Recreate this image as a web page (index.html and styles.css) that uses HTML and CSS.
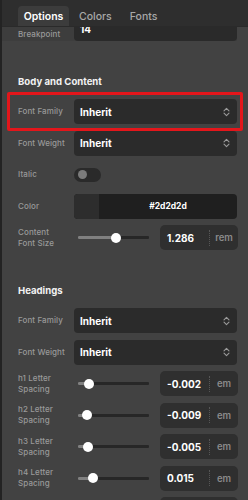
FILE: index.html
```html
<!DOCTYPE html>
<html>
<head>
<meta charset="utf-8">
<link rel="stylesheet" href="styles.css">
</head>
<body>
<div class="app">
  <div class="tabs">
    <div class="tab active">Options</div>
    <div class="tab">Colors</div>
    <div class="tab">Fonts</div>
  </div>
  <div class="panel">
    <div class="row row-clip">
      <div class="label">Breakpoint</div>
      <div class="clip"><div class="input">14</div></div>
    </div>

    <section class="section">
      <h2 class="heading">Body and Content</h2>
      <div class="rows">
        <div class="row highlight">
          <div class="label">Font Family</div>
          <div class="select"><span>Inherit</span><svg class="chev" width="7" height="10" viewBox="0 0 7 10"><path d="M1 3.8 L3.5 1.3 L6 3.8 M1 6.2 L3.5 8.7 L6 6.2" fill="none" stroke="#9a9a9a" stroke-width="1.1" stroke-linecap="round" stroke-linejoin="round"/></svg></div>
        </div>
        <div class="row">
          <div class="label">Font Weight</div>
          <div class="select"><span>Inherit</span><svg class="chev" width="7" height="10" viewBox="0 0 7 10"><path d="M1 3.8 L3.5 1.3 L6 3.8 M1 6.2 L3.5 8.7 L6 6.2" fill="none" stroke="#9a9a9a" stroke-width="1.1" stroke-linecap="round" stroke-linejoin="round"/></svg></div>
        </div>
        <div class="row">
          <div class="label">Italic</div>
          <div><div class="toggle"><div class="knob"></div></div></div>
        </div>
        <div class="row">
          <div class="label">Color</div>
          <div class="color"><div class="swatch"></div><div class="hex">#2d2d2d</div></div>
        </div>
        <div class="row">
          <div class="label">Content<br>Font Size</div>
          <div class="control">
            <div class="slider"><div class="track"><div class="fill" style="width:53%"></div><div class="thumb"></div></div></div>
            <div class="num"><span class="val">1.286</span><span class="sep"></span><span class="unit">rem</span></div>
          </div>
        </div>
      </div>
    </section>

    <section class="section">
      <h2 class="heading">Headings</h2>
      <div class="rows">
        <div class="row">
          <div class="label">Font Family</div>
          <div class="select"><span>Inherit</span><svg class="chev" width="7" height="10" viewBox="0 0 7 10"><path d="M1 3.8 L3.5 1.3 L6 3.8 M1 6.2 L3.5 8.7 L6 6.2" fill="none" stroke="#9a9a9a" stroke-width="1.1" stroke-linecap="round" stroke-linejoin="round"/></svg></div>
        </div>
        <div class="row">
          <div class="label">Font Weight</div>
          <div class="select"><span>Inherit</span><svg class="chev" width="7" height="10" viewBox="0 0 7 10"><path d="M1 3.8 L3.5 1.3 L6 3.8 M1 6.2 L3.5 8.7 L6 6.2" fill="none" stroke="#9a9a9a" stroke-width="1.1" stroke-linecap="round" stroke-linejoin="round"/></svg></div>
        </div>
        <div class="row">
          <div class="label">h1 Letter<br>Spacing</div>
          <div class="control">
            <div class="slider"><div class="track"><div class="fill" style="width:16%"></div><div class="thumb"></div></div></div>
            <div class="num"><span class="val">-0.002</span><span class="sep"></span><span class="unit">em</span></div>
          </div>
        </div>
        <div class="row">
          <div class="label">h2 Letter<br>Spacing</div>
          <div class="control">
            <div class="slider"><div class="track"><div class="fill" style="width:13%"></div><div class="thumb"></div></div></div>
            <div class="num"><span class="val">-0.009</span><span class="sep"></span><span class="unit">em</span></div>
          </div>
        </div>
        <div class="row">
          <div class="label">h3 Letter<br>Spacing</div>
          <div class="control">
            <div class="slider"><div class="track"><div class="fill" style="width:14%"></div><div class="thumb"></div></div></div>
            <div class="num"><span class="val">-0.005</span><span class="sep"></span><span class="unit">em</span></div>
          </div>
        </div>
        <div class="row">
          <div class="label">h4 Letter<br>Spacing</div>
          <div class="control">
            <div class="slider"><div class="track"><div class="fill" style="width:21%"></div><div class="thumb"></div></div></div>
            <div class="num"><span class="val">0.015</span><span class="sep"></span><span class="unit">em</span></div>
          </div>
        </div>
        <div class="row">
          <div class="label">h5 Letter<br>Spacing</div>
          <div class="control">
            <div class="slider"><div class="track"><div class="fill" style="width:18%"></div><div class="thumb"></div></div></div>
            <div class="num"><span class="val">0.000</span><span class="sep"></span><span class="unit">em</span></div>
          </div>
        </div>
      </div>
    </section>
  </div>
</div>
</body>
</html>
```

FILE: styles.css
```css
* { box-sizing: border-box; }
html, body { margin: 0; padding: 0; }
body {
  background: #424242;
  font-family: Inter, "Noto Sans", "DejaVu Sans", sans-serif;
}
.app {
  width: 248px;
  height: 500px;
  overflow: hidden;
  background: #424242;
  border-left: 2px solid #232323;
}
.tabs {
  height: 27px;
  background: #2e2e2e;
  display: flex;
  align-items: flex-end;
  gap: 2px;
  padding-left: 16px;
  border-bottom: 1px solid #2a2a2a;
}
.tab {
  height: 20px;
  padding: 0 8px;
  display: flex;
  align-items: center;
  font-size: 10.5px;
  color: #a8a8a8;
  font-weight: 500;
}
.tab.active {
  background: #3c3c3c;
  color: #ffffff;
  font-weight: 600;
  border-radius: 4px 4px 0 0;
  width: 51px;
  justify-content: center;
}
.panel {
  padding: 0 11px 0 16px;
}
.row {
  display: grid;
  grid-template-columns: 56px 1fr;
  align-items: center;
  height: 25px;
  position: relative;
}
.row-clip {
  height: 14px;
  background: #3d3d3d;
  margin-left: -16px;
  padding-left: 16px;
}
.clip {
  height: 14px;
  overflow: hidden;
}
.input {
  height: 25px;
  margin-top: -11px;
  background: #2a2a2a;
  border-radius: 4px;
  padding-left: 6px;
  display: flex;
  align-items: center;
  color: #fff;
  font-weight: 700;
  font-size: 10px;
}
.label {
  font-size: 8px;
  line-height: 11px;
  color: #999;
  font-weight: 500;
  letter-spacing: 0.1px;
}
.section .heading {
  margin: 35px 0 11px;
  font-size: 9.6px;
  line-height: 12px;
  font-weight: 700;
  color: #f2f2f2;
}
.rows {
  display: flex;
  flex-direction: column;
  gap: 6.5px;
}
.highlight::before {
  content: "";
  position: absolute;
  top: -7px;
  bottom: -7px;
  left: -11px;
  right: -6px;
  border: 3px solid #e3161b;
  border-radius: 2px;
  pointer-events: none;
}
.select {
  height: 25px;
  background: #2b2b2b;
  border-radius: 4px;
  padding: 0 7px 0 6px;
  display: flex;
  align-items: center;
  justify-content: space-between;
  color: #fff;
  font-weight: 700;
  font-size: 10px;
}
.chev { display: block; }
.toggle {
  width: 27px;
  height: 14px;
  border-radius: 7px;
  background: #2a2a2a;
  display: flex;
  align-items: center;
  padding-left: 4px;
}
.knob {
  width: 9px;
  height: 9px;
  border-radius: 50%;
  background: #7b7b7b;
}
.color {
  height: 25px;
  border-radius: 4px;
  background: #1f1f1f;
  display: flex;
  overflow: hidden;
}
.swatch {
  width: 25px;
  background: #2d2d2d;
}
.hex {
  flex: 1;
  display: flex;
  align-items: center;
  justify-content: center;
  color: #fff;
  font-size: 8.5px;
  font-weight: 700;
}
.control {
  display: flex;
  align-items: center;
  height: 25px;
}
.slider {
  flex: 1;
  padding: 0 11px 0 4px;
}
.track {
  height: 3px;
  background: #272727;
  border-radius: 1px;
  display: flex;
  align-items: center;
}
.fill {
  height: 3px;
  background: #808080;
  border-radius: 1px 0 0 1px;
}
.thumb {
  width: 10px;
  height: 10px;
  border-radius: 50%;
  background: #fff;
  margin-left: -5px;
  flex: none;
}
.num {
  width: 78px;
  height: 25px;
  margin-right: -1px;
  background: #2f2f2f;
  border-radius: 5px;
  display: flex;
  align-items: center;
}
.val {
  flex: 1;
  padding-left: 7px;
  color: #fff;
  font-weight: 700;
  font-size: 10px;
}
.sep {
  width: 0;
  height: 16px;
  border-left: 1px dotted #565656;
}
.unit {
  width: 28px;
  text-align: center;
  color: #8a8a8a;
  font-size: 9.5px;
  font-weight: 600;
}
```
